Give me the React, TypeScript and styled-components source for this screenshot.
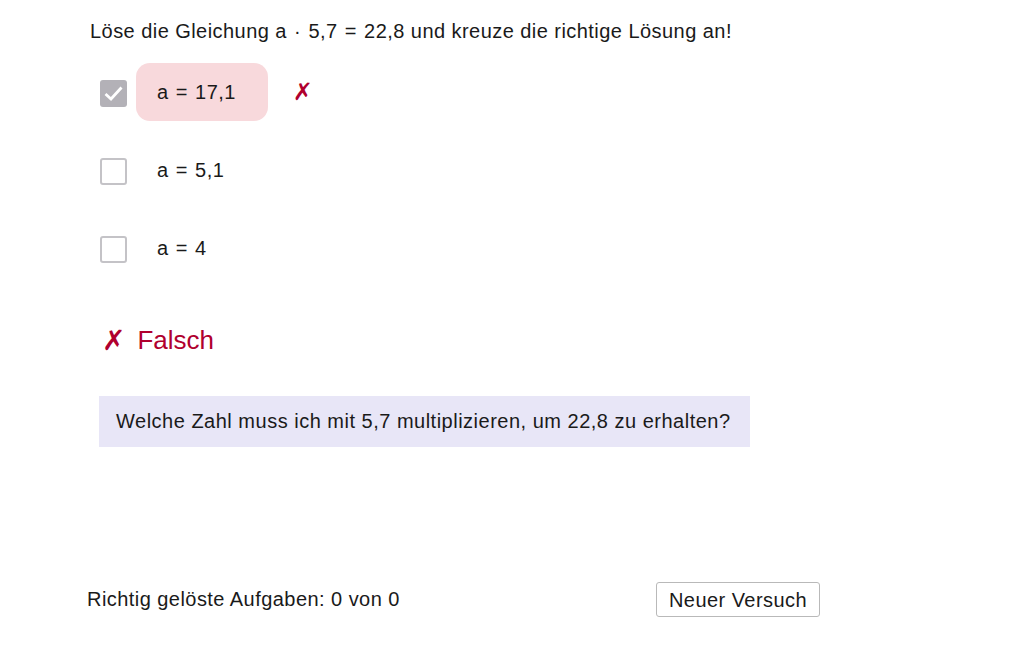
import React from "react";
import styled, { createGlobalStyle } from "styled-components";

const Global = createGlobalStyle`
  html, body { margin: 0; padding: 0; background: #ffffff; }
  body {
    font-family: "Liberation Sans", Arial, sans-serif;
    color: #1a1a1a;
    width: 1032px;
    height: 645px;
    overflow: hidden;
    letter-spacing: 0.45px;
  }
`;

const Page = styled.div`
  display: flex;
  flex-direction: column;
  padding: 19px 0 0 90px;
  height: 645px;
  box-sizing: border-box;
`;

const Title = styled.div`
  font-size: 20px;
  line-height: 24px;
  height: 24px;
`;

/* binary operators in formulas get extra room, as typeset math does */
const Op = styled.span`
  margin: 0 0.36em;
`;

const Options = styled.div`
  display: flex;
  flex-direction: column;
  gap: 20px;
  margin-top: 20px;
  padding-left: 10px;
`;

const Row = styled.label`
  display: flex;
  align-items: center;
  height: 58px;
`;

const Box = styled.span<{ $checked?: boolean }>`
  width: 27px;
  height: 27px;
  box-sizing: border-box;
  border-radius: 3px;
  display: flex;
  align-items: center;
  justify-content: center;
  margin-top: 2px;
  background: ${(p) => (p.$checked ? "#b3b1b7" : "#ffffff")};
  border: ${(p) => (p.$checked ? "none" : "2px solid #c4c3c7")};
`;

const Pill = styled.span<{ $wrong?: boolean }>`
  display: flex;
  align-items: center;
  height: 58px;
  margin-left: 9px;
  padding: 0 32px 0 21px;
  border-radius: 14px;
  font-size: 20px;
  background: ${(p) => (p.$wrong ? "#f8d9dc" : "transparent")};
`;

const Mark = styled.span`
  margin-left: 25px;
  font-family: "DejaVu Sans", sans-serif;
  font-size: 24px;
  color: #b0002e;
  font-weight: bold;
`;

const Verdict = styled.div`
  display: flex;
  align-items: center;
  gap: 12px;
  margin-top: 45px;
  padding-left: 12px;
  font-size: 26px;
  letter-spacing: 0;
  color: #b0002e;
  height: 36px;
`;

const VerdictMark = styled.span`
  font-family: "DejaVu Sans", sans-serif;
  font-weight: bold;
  font-size: 28px;
`;

const Hint = styled.div`
  margin: 38px 0 0 9px;
  width: 651px;
  height: 51px;
  box-sizing: border-box;
  padding: 0 17px;
  display: flex;
  align-items: center;
  background: #e8e6f7;
  font-size: 20px;
  letter-spacing: 0.5px;
`;

const Footer = styled.div`
  margin-top: auto;
  margin-bottom: 28px;
  margin-left: -3px;
  display: grid;
  grid-template-columns: 569px auto;
  align-items: center;
`;

const Score = styled.div`
  font-size: 20px;
`;

const Button = styled.button`
  width: 164px;
  height: 35px;
  background: #ffffff;
  border: 1px solid #b9b9b9;
  border-radius: 3px;
  font-family: inherit;
  letter-spacing: inherit;
  font-size: 20px;
  color: #1a1a1a;
  padding: 2px 0 0;
  justify-self: start;
`;

const Check = () => (
  <svg width="21" height="17" viewBox="0 0 21 17">
    <path d="M2.5 9 L8 14 L18.5 2.5" fill="none" stroke="#ffffff" strokeWidth="2.8" />
  </svg>
);

const answers = [
  { value: "17,1", checked: true },
  { value: "5,1", checked: false },
  { value: "4", checked: false },
];

export default function App() {
  return (
    <>
      <Global />
      <Page>
        <Title>
          Löse die Gleichung a<Op>·</Op>5,7<Op>=</Op>22,8 und kreuze die richtige Lösung an!
        </Title>
        <Options>
          {answers.map((a) => (
            <Row key={a.value}>
              <Box $checked={a.checked}>{a.checked && <Check />}</Box>
              <Pill $wrong={a.checked}>
                a<Op>=</Op>
                {a.value}
              </Pill>
              {a.checked && <Mark>✗</Mark>}
            </Row>
          ))}
        </Options>
        <Verdict>
          <VerdictMark>✗</VerdictMark>
          <span>Falsch</span>
        </Verdict>
        <Hint>Welche Zahl muss ich mit 5,7 multiplizieren, um 22,8 zu erhalten?</Hint>
        <Footer>
          <Score>Richtig gelöste Aufgaben: 0 von 0</Score>
          <Button>Neuer Versuch</Button>
        </Footer>
      </Page>
    </>
  );
}
